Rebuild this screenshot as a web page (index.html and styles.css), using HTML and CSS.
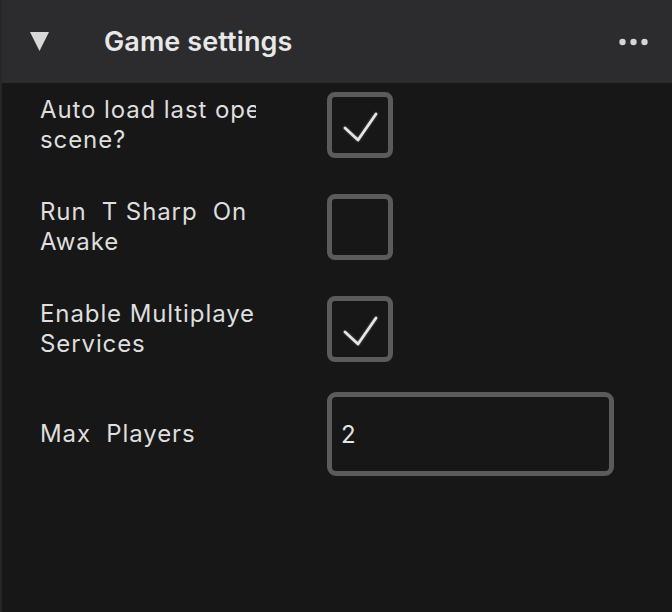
FILE: index.html
```html
<!DOCTYPE html>
<html>
<head>
<meta charset="utf-8">
<link rel="stylesheet" href="styles.css">
</head>
<body>
<div class="panel">
  <div class="header">
    <svg class="caret" width="19" height="19" viewBox="0 0 19 19"><polygon points="0,0 19,0 9.5,19" fill="#d8d8d8"/></svg>
    <div class="title">Game settings</div>
    <svg class="more" width="30" height="8" viewBox="0 0 30 8"><circle cx="3.5" cy="4" r="3.2" fill="#d4d4d4"/><circle cx="14.5" cy="4" r="3.2" fill="#d4d4d4"/><circle cx="25.5" cy="4" r="3.2" fill="#d4d4d4"/></svg>
  </div>
  <div class="body">
    <div class="row">
      <div class="label"><span class="line">Auto load last open</span><span class="line">scene?</span></div>
      <div class="checkbox">
        <svg width="56" height="56" viewBox="0 0 56 56"><polyline points="13,31 26,43 44,17" fill="none" stroke="#e4e4e4" stroke-width="2.8" stroke-linecap="round" stroke-linejoin="round"/></svg>
      </div>
    </div>
    <div class="row">
      <div class="label"><span class="line">Run  T Sharp  On</span><span class="line">Awake</span></div>
      <div class="checkbox"></div>
    </div>
    <div class="row">
      <div class="label"><span class="line">Enable Multiplayer</span><span class="line">Services</span></div>
      <div class="checkbox">
        <svg width="56" height="56" viewBox="0 0 56 56"><polyline points="13,31 26,43 44,17" fill="none" stroke="#e4e4e4" stroke-width="2.8" stroke-linecap="round" stroke-linejoin="round"/></svg>
      </div>
    </div>
    <div class="row row-field">
      <div class="label"><span class="line">Max  Players</span></div>
      <div class="field">2</div>
    </div>
  </div>
</div>
</body>
</html>
```
FILE: styles.css
```css
html, body {
  margin: 0;
  padding: 0;
  background: #171717;
}
body {
  width: 672px;
  height: 612px;
  overflow: hidden;
  font-family: Inter, "Noto Sans", sans-serif;
}
.panel {
  width: 672px;
  height: 612px;
  display: flex;
  flex-direction: column;
  border-left: 2px solid #262626;
  box-sizing: border-box;
}
.header {
  height: 83px;
  flex: none;
  background: #2c2c2e;
  display: flex;
  align-items: center;
  padding-left: 28px;
  padding-right: 23px;
}
.caret {
  display: block;
}
.title {
  margin-left: 55px;
  font-size: 27px;
  font-weight: 600;
  color: #e8e8e8;
  letter-spacing: 0.1px;
}
.more {
  display: block;
  margin-left: auto;
}
.body {
  flex: 1;
  background: #171717;
  display: flex;
  flex-direction: column;
  gap: 36px;
  padding-top: 9px;
}
.row {
  display: flex;
  align-items: center;
  padding-left: 38px;
}
.row-field {
  margin-top: -6px;
}
.label {
  width: 216px;
  margin-right: 71px;
  overflow: hidden;
  color: #dedede;
  font-size: 24px;
  letter-spacing: 0.9px;
  line-height: 30px;
}
.line {
  display: block;
  white-space: pre;
  overflow: hidden;
}
.checkbox {
  width: 66px;
  height: 66px;
  box-sizing: border-box;
  border: 5px solid #5b5b5b;
  border-radius: 8px;
  display: flex;
  align-items: center;
  justify-content: center;
}
.checkbox svg {
  display: block;
  filter: drop-shadow(0 0 1px rgba(255,255,255,0.35));
}
.field {
  width: 287px;
  height: 84px;
  box-sizing: border-box;
  border: 5px solid #5b5b5b;
  border-radius: 9px;
  padding-left: 9px;
  display: flex;
  align-items: center;
  color: #e4e4e4;
  font-size: 24px;
}
```
